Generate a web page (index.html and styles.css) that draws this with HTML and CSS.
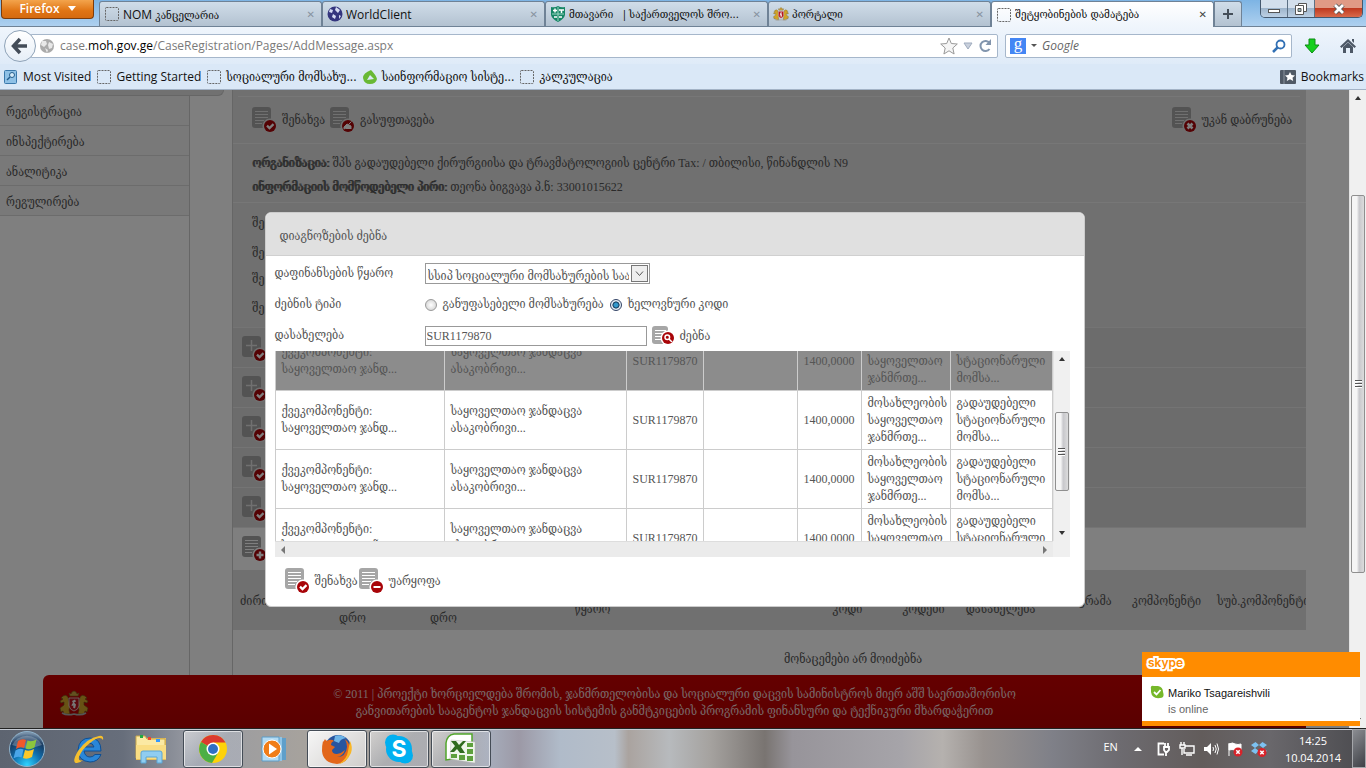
FILE: index.html
```html
<!DOCTYPE html>
<html lang="ka">
<head>
  <meta charset="UTF-8" />
  <meta name="viewport" content="width=device-width, initial-scale=1" />
  <title>შეტყობინების დამატება</title>
  <link rel="stylesheet" href="styles.css">
</head>
<body>
  <svg class="defs" width="0" height="0">
    <symbol id="doc" viewBox="0 0 26 26">
      <rect x="0" y="0" width="19" height="21" rx="3" fill="#a6a6a6"/>
      <path d="M3 4.5h13M3 7.5h13M3 10.5h13M3 13.5h9M3 16.5h7" stroke="#fff" stroke-width="1"/>
      <circle cx="18" cy="19" r="7.6" fill="#fff"/>
      <circle cx="18" cy="19" r="6" fill="#a80408"/>
    </symbol>
    <symbol id="doc-dim" viewBox="0 0 26 26">
      <rect x="0" y="0" width="19" height="21" rx="3" fill="#a6a6a6"/>
      <path d="M3 4.5h13M3 7.5h13M3 10.5h13M3 13.5h9M3 16.5h7" stroke="#e0e0e0" stroke-width="1"/>
      <circle cx="18" cy="19" r="7.6" fill="#e0e0e0"/>
      <circle cx="18" cy="19" r="6" fill="#a80408"/>
    </symbol>
    <symbol id="i-save" viewBox="0 0 26 26"><use href="#doc"/><path d="M15 18.6l2.5 2.5 4-4" fill="none" stroke="#fff" stroke-width="2.2"/></symbol>
    <symbol id="i-save-dim" viewBox="0 0 26 26"><use href="#doc-dim"/><path d="M15 18.6l2.5 2.5 4-4" fill="none" stroke="#fff" stroke-width="2.2"/></symbol>
    <symbol id="i-clear" viewBox="0 0 26 26"><use href="#doc-dim"/><path d="M14 22v-2l3-3 4 2v3l-1-1-1 1-1-1-1 1-1-1zM18.500 17.500l3-3" fill="#fff" stroke="#fff" stroke-width="1"/></symbol>
    <symbol id="i-back" viewBox="0 0 26 26"><use href="#doc-dim"/><path d="M15.500 16.500l5 5M20.500 16.500l-5 5" stroke="#fff" stroke-width="2.600"/></symbol>
    <symbol id="i-minus" viewBox="0 0 26 26"><use href="#doc"/><path d="M14.500 19h7" stroke="#fff" stroke-width="2"/></symbol>
    <symbol id="i-plus" viewBox="0 0 26 26"><use href="#doc"/><path d="M14.500 19h7M18 15.500v7" stroke="#fff" stroke-width="2.400"/></symbol>
    <symbol id="i-expand" viewBox="0 0 26 26">
      <rect width="19" height="21" rx="3" fill="#a6a6a6"/>
      <path d="M4 9.500h11M9.500 4v11" stroke="#e0e0e0" stroke-width="1.500"/>
      <circle cx="18" cy="19" r="7.600" fill="#e0e0e0"/><circle cx="18" cy="19" r="6" fill="#a80408"/>
      <path d="M15 18.600l2.500 2.500 4-4" fill="none" stroke="#fff" stroke-width="2.200"/>
    </symbol>
    <symbol id="i-search" viewBox="0 0 24 20">
      <rect y="0" width="16" height="18" rx="3" fill="#a6a6a6"/>
      <path d="M3 4.500h11M3 7.500h8M3 10.500h6M3 13.500h6" stroke="#fff"/>
      <circle cx="16" cy="12" r="7.500" fill="#fff"/><circle cx="16" cy="12" r="6" fill="#a80408"/>
      <circle cx="15.300" cy="11.300" r="2.300" fill="none" stroke="#fff" stroke-width="1.500"/><path d="M17 13l3 3" stroke="#fff" stroke-width="1.500"/>
    </symbol>
    <symbol id="dotted" viewBox="0 0 16 16"><rect x="1.500" y="1.500" width="13" height="13" rx="1" fill="none" stroke="#666" stroke-dasharray="2 1"/></symbol>
    <symbol id="arms" viewBox="0 0 30 26">
      <path d="M11 6l-1-3 2 1 1-2 2-1 2 1 1 2 2-1-1 3z" fill="#c8a040" stroke="#7c6424" stroke-width=".6"/>
      <path d="M9 7q-2-3-5-1L2 8l2 1-3 2 1 2 3-1v3l-4 3 1 4 2-1 1 3h6l-1-4 1-4-1-4z" fill="#d0a428" stroke="#66501c" stroke-width=".6"/>
      <path d="M21 7q2-3 5-1l2 2-2 1 3 2-1 2-3-1v3l4 3-1 4-2-1-1 3h-6l1-4-1-4 1-4z" fill="#d0a428" stroke="#66501c" stroke-width=".6"/>
      <path d="M10 8h10v8q-1 4-5 5-4-1-5-5z" fill="#b81420" stroke="#ddd" stroke-width=".8"/>
      <path d="M13 11l3-1.500 1 2-2 1 2 2-1 4-2-1 .5-2-2 .5.500-2 1-1z" fill="#eee"/>
      <path d="M3 23q5 3 12 1 7 2 12-1" fill="none" stroke="#aaa" stroke-width="1.600"/>
    </symbol>
  </svg>

  <header class="titlebar">
    <button class="firefox-menu">Firefox <i class="caret"></i></button>
    <div class="tabs">
      <div class="tab"><svg class="fav"><use href="#dotted"/></svg><span>NOM <span class="geo">კანცელარია</span></span><button class="close" aria-label="Close">✕</button></div>
      <div class="tab"><svg class="fav" viewBox="0 0 16 16"><circle cx="8" cy="8" r="7.500" fill="#34357e"/><path d="M3 3l3 1-1 3-3-1zM9 1l4 3-2 3-3-3zM6 8l3 2-1 3-3-2zM12 9l2 1-2 3z" fill="#d6dcf3"/></svg><span>WorldClient</span><button class="close" aria-label="Close">✕</button></div>
      <div class="tab"><svg class="fav" viewBox="0 0 16 16"><path d="M1 1q4 1 7-1 3 2 7 1v8q-1 4-7 7-6-3-7-7z" fill="#168665"/><path d="M8 1v14M2 8h12" stroke="#9cd6c3"/><path d="M5 2.500v4M3 4.500h4M9 4h5M11.500 4v3M4 11h3M9 11h3" stroke="#fff" stroke-width="1.500"/></svg><span class="geo">მთავარი &nbsp; | საქართველოს შრო...</span><button class="close" aria-label="Close">✕</button></div>
      <div class="tab"><svg class="fav" viewBox="0 0 30 26"><use href="#arms"/></svg><span class="geo">პორტალი</span><button class="close" aria-label="Close">✕</button></div>
      <div class="tab active"><svg class="fav"><use href="#dotted"/></svg><span class="geo">შეტყობინების დამატება</span><button class="close" aria-label="Close">✕</button></div>
      <button class="new-tab" aria-label="New tab"><svg width="12" height="12"><path d="M6 1v10M1 6h10" stroke="#444e59" stroke-width="2"/></svg></button>
    </div>
    <div class="win-buttons">
      <button aria-label="Minimize"><svg width="14" height="12"><rect x="1.500" y="6.500" width="11" height="3" fill="#fff" stroke="#555"/></svg></button>
      <button aria-label="Restore"><svg width="14" height="12"><path d="M4.500 .5h8v8h-8z" fill="#fff" stroke="#555"/><path d="M1.500 2.500h8v9h-8z" fill="#fff" stroke="#555"/><path d="M4 5.500h3v3H4z" fill="#9bb" stroke="#555"/></svg></button>
      <button class="win-close" aria-label="Close"><svg width="14" height="12"><path d="M3 2l8 8M11 2l-8 8" stroke="#555" stroke-width="4.500"/><path d="M3 2l8 8M11 2l-8 8" stroke="#fff" stroke-width="2.800"/></svg></button>
    </div>
  </header>

  <nav class="navbar">
    <button class="back" aria-label="Back"><svg width="18" height="18"><path d="M2 9h14M9 2L2.500 9 9 16" fill="none" stroke="#434c58" stroke-width="3.500"/></svg></button>
    <div class="urlbar">
      <svg width="16" height="16" viewBox="0 0 16 16"><circle cx="8" cy="8" r="7" fill="#aaa"/><path d="M3 3l4 0 1 3-3 3-3-2zM10 4l4 2-1 4-3 1-1-4zM6 10l3 2-1 3z" fill="#e8e8e8"/></svg>
      <div class="url" role="textbox" aria-label="Address" contenteditable="true" spellcheck="false">case.<b>moh.gov.ge</b>/CaseRegistration/Pages/AddMessage.aspx</div>
      <svg width="18" height="18" viewBox="0 0 18 18"><path d="M9 1l2.300 5.500 6 .5-4.500 4 1.300 6L9 13.800 3.900 17l1.300-6L.7 7l6-.5z" fill="#f5f5f5" stroke="#999"/></svg>
      <svg width="10" height="16"><path d="M1 5h8l-4 6z" fill="#c9d0dc" stroke="#9fabbe"/></svg>
      <svg width="14" height="16"><path d="M11.500 11a5 5 0 1 1 0-6" fill="none" stroke="#8295ad" stroke-width="2"/><path d="M13 1v6H7.500z" fill="#8295ad"/></svg>
    </div>
    <div class="searchbar">
      <span class="g-logo">g</span><i class="caret dark"></i>
      <input type="text" placeholder="Google" aria-label="Search">
      <svg width="14" height="14"><circle cx="8.500" cy="5.500" r="4" fill="none" stroke="#3270b4" stroke-width="1.800"/><path d="M5.500 8.500l-4.500 4.500" stroke="#3270b4" stroke-width="2.500"/></svg>
    </div>
    <button class="tool" aria-label="Downloads"><svg width="16" height="16"><path d="M5 1h6v6h4l-7 8-7-8h4z" fill="#14d01c" stroke="#0c8c14"/></svg></button>
    <button class="tool" aria-label="Home"><svg width="16" height="16"><path d="M0 8.500L8 1l8 7.500-1.500 1.500L8 4 1.500 10zM3 9l5-4.500L13 9v6h-3v-5H6v5H3z" fill="#4d5866"/><path d="M12 1h2v4l-2-2z" fill="#4d5866"/></svg></button>
  </nav>

  <nav class="bookmarks">
    <a href="#"><svg width="16" height="16"><rect x="1.500" y="1.500" width="12" height="13" rx="1" fill="#8fc1e6" stroke="#3a78ab"/><circle cx="9" cy="6" r="2.500" fill="#d5ebf9" stroke="#235d8d"/><path d="M7 8l-3 3" stroke="#235d8d" stroke-width="1.500"/></svg>Most Visited</a>
    <a href="#"><svg class="fav"><use href="#dotted"/></svg>Getting Started</a>
    <a href="#" class="geo"><svg class="fav"><use href="#dotted"/></svg>სოციალური მომსახუ...</a>
    <a href="#" class="geo"><svg width="16" height="16"><path d="M9 1q-8 3-8 8 1 6 7 6 6 0 7-5Q14 6 9 1zm-1 5l4 4-7 1z" fill="#69b935" fill-rule="evenodd"/></svg>საინფორმაციო სისტე...</a>
    <a href="#" class="geo"><svg class="fav"><use href="#dotted"/></svg>კალკულაცია</a>
    <button class="bm-menu"><svg width="16" height="14"><rect width="16" height="14" rx="1" fill="#505a66"/><path d="M4 0v14" stroke="#8a929c"/><path d="M10 2l1.500 3 3.500.5-2.500 2.200.7 3.300-3.200-1.700L6.800 11l.7-3.300L5 5.500 8.500 5z" fill="#fff"/></svg>Bookmarks</button>
  </nav>

  <div class="viewport">
    <div class="page">
      <div class="columns">
        <aside class="sidebar">
          <div class="side-top"></div>
          <ul>
            <li><a href="#">რეგისტრაცია</a></li>
            <li><a href="#">ინსპექტირება</a></li>
            <li><a href="#">ანალიტიკა</a></li>
            <li><a href="#">რეგულირება</a></li>
          </ul>
        </aside>
        <main class="panel">
          <div class="toolbar">
            <button class="action"><svg><use href="#i-save-dim"/></svg>შენახვა</button>
            <button class="action"><svg><use href="#i-clear"/></svg>გასუფთავება</button>
            <button class="action right"><svg><use href="#i-back"/></svg>უკან დაბრუნება</button>
          </div>
          <div class="info">
            <p><b>ორგანიზაცია:</b> შპს გადაუდებელი ქირურგიისა და ტრავმატოლოგიის ცენტრი Tax: / თბილისი, წინანდლის N9</p>
            <p><b>ინფორმაციის მომწოდებელი პირი:</b> თეონა ბიგვავა პ.ნ: 33001015622</p>
          </div>
          <div class="fields">
            <p>შე</p>
            <p>შე</p>
            <p class="short">შე</p>
            <p class="tall">შე</p>
          </div>
          <div class="section"><svg><use href="#i-expand"/></svg></div>
          <div class="section"><svg><use href="#i-expand"/></svg></div>
          <div class="section"><svg><use href="#i-expand"/></svg></div>
          <div class="section"><svg><use href="#i-expand"/></svg></div>
          <div class="section"><svg><use href="#i-expand"/></svg></div>
          <div class="section open"><svg><use href="#i-plus"/></svg></div>
          <table class="records">
            <colgroup><col class="c1"><col class="c2"><col class="c2"><col class="c4"><col class="c5"><col class="c6"><col class="c7"><col class="c8"><col class="c9"><col class="c10"><col></colgroup>
            <thead>
              <tr>
                <th class="side">ძირი</th>
                <th>&nbsp;<br>&nbsp;<br>დრო</th>
                <th>&nbsp;<br>&nbsp;<br>დრო</th>
                <th>&nbsp;<br>წყარო</th>
                <th></th>
                <th>&nbsp;<br>კოდი</th>
                <th>&nbsp;<br>კოდები</th>
                <th>&nbsp;<br>დასახელება</th>
                <th>პროგრამა</th>
                <th>კომპონენტი</th>
                <th class="side">სუბ.კომპონენტი</th>
              </tr>
            </thead>
          </table>
          <p class="empty">მონაცემები არ მოიძებნა</p>
        </main>
      </div>
      <footer class="footer">
        <svg width="30" height="26"><use href="#arms"/></svg>
        <p>© 2011 | პროექტი ხორციელდება შრომის, ჯანმრთელობისა და სოციალური დაცვის სამინისტროს მიერ აშშ საერთაშორისო<br>განვითარების სააგენტოს ჯანდაცვის სისტემის განმტკიცების პროგრამის ფინანსური და ტექნიკური მხარდაჭერით</p>
      </footer>
      <div class="overlay">
        <form class="modal">
          <h2>დიაგნოზების ძებნა</h2>
          <div class="modal-body">
            <div class="row">
              <label for="source">დაფინანსების წყარო</label>
              <span class="select">
                <select id="source"><option>სსიპ სოციალური მომსახურების სააგენტო</option></select>
                <svg width="17" height="17"><rect x=".5" y=".5" width="16" height="16" fill="#eee" stroke="#777"/><path d="M5 6.500l3.500 4 3.500-4" fill="none" stroke="#555"/></svg>
              </span>
            </div>
            <div class="row">
              <span class="label">ძებნის ტიპი</span>
              <input type="radio" name="type" id="t1"><label for="t1">განუფასებელი მომსახურება</label>
              <input type="radio" name="type" id="t2" checked><label for="t2">ხელოვნური კოდი</label>
            </div>
            <div class="row">
              <label for="name">დასახელება</label>
              <input type="text" id="name" value="SUR1179870">
              <button type="button" class="action search"><svg><use href="#i-search"/></svg>ძებნა</button>
            </div>
            <div class="grid-box">
              <div class="grid-scroll">
                <table class="results">
                  <colgroup><col class="r1"><col class="r2"><col class="r3"><col class="r4"><col class="r5"><col class="r6"><col></colgroup>
                  <tbody>
                    <tr class="selected"><td>ქვეკომპონენტი:<br>საყოველთაო ჯანდ...</td><td>საყოველთაო ჯანდაცვა<br>ასაკობრივი...</td><td>SUR1179870</td><td></td><td>1400,0000</td><td>მოსახლეობის<br>საყოველთაო<br>ჯანმრთე...</td><td>გადაუდებელი<br>სტაციონარული<br>მომსა...</td></tr>
                    <tr><td>ქვეკომპონენტი:<br>საყოველთაო ჯანდ...</td><td>საყოველთაო ჯანდაცვა<br>ასაკობრივი...</td><td>SUR1179870</td><td></td><td>1400,0000</td><td>მოსახლეობის<br>საყოველთაო<br>ჯანმრთე...</td><td>გადაუდებელი<br>სტაციონარული<br>მომსა...</td></tr>
                    <tr><td>ქვეკომპონენტი:<br>საყოველთაო ჯანდ...</td><td>საყოველთაო ჯანდაცვა<br>ასაკობრივი...</td><td>SUR1179870</td><td></td><td>1400,0000</td><td>მოსახლეობის<br>საყოველთაო<br>ჯანმრთე...</td><td>გადაუდებელი<br>სტაციონარული<br>მომსა...</td></tr>
                    <tr><td>ქვეკომპონენტი:<br>საყოველთაო ჯანდ...</td><td>საყოველთაო ჯანდაცვა<br>ასაკობრივი...</td><td>SUR1179870</td><td></td><td>1400,0000</td><td>მოსახლეობის<br>საყოველთაო<br>ჯანმრთე...</td><td>გადაუდებელი<br>სტაციონარული<br>მომსა...</td></tr>
                  </tbody>
                </table>
              </div>
              <div class="vbar"><i class="up"></i><div class="thumb"><i class="grip"></i></div><i class="down"></i></div>
              <div class="hbar"><i class="left"></i><i class="right"></i></div>
            </div>
            <div class="modal-actions">
              <button type="button" class="action"><svg><use href="#i-save"/></svg>შენახვა</button>
              <button type="button" class="action"><svg><use href="#i-minus"/></svg>უარყოფა</button>
            </div>
          </div>
        </form>
      </div>
    </div>
    <div class="vbar page-bar"><i class="up"></i><div class="thumb"><i class="grip"></i></div><i class="down"></i></div>
  </div>

  <div class="toast">
    <div class="toast-head">skype</div>
    <div class="toast-body">
      <svg width="14" height="14"><path d="M1 4Q0 0 4 1h4q5 1 5 6 2 6-3 6-8 1-9-6z" fill="#76b82a"/><path d="M4 7l2.500 2.500L10.500 5" fill="none" stroke="#fff" stroke-width="1.800"/></svg>
      <div><p>Mariko Tsagareishvili</p><p class="status">is online</p></div>
    </div>
  </div>

  <footer class="taskbar">
    <button class="start" aria-label="Start"><svg width="38" height="38" viewBox="0 0 38 38">
      <defs><radialGradient id="orb" cx=".5" cy=".95" r=".9"><stop offset="0" stop-color="#2fd3ff"/><stop offset=".45" stop-color="#0f6fae"/><stop offset=".8" stop-color="#17395f"/><stop offset="1" stop-color="#7890a8"/></radialGradient></defs>
      <circle cx="19" cy="19" r="17.500" fill="url(#orb)" stroke="#8fb3cc"/>
      <path d="M4 15a16 14 0 0 1 30 0q-15 6-30 0z" fill="#fff" opacity=".25"/>
      <path d="M10 11q4-3 8-1l-2 8q-4-2-8 1z" fill="#f0592b"/><path d="M19.500 10.500q4 2 9-1l-2 8q-5 3-9 1z" fill="#8cc63e"/>
      <path d="M7.500 20.500q4-3 8-1l-2 8q-4-2-8 1z" fill="#4aa6e8"/><path d="M17 20q4 2 9-1l-2 8q-5 3-9 1z" fill="#fdc827"/></svg></button>
    <button class="task" aria-label="Internet Explorer"><svg width="34" height="32" viewBox="0 0 34 32"><path d="M29 18H12q1 6 6 6 3 0 5-2.500h6Q26 29 18 29 6 28 6 17 7 5 18 5q11 0 11 13zM12 14h10q-1-4-5-4t-5 4z" fill="#2a86d8" stroke="#0e4f93"/><path d="M31 7q1-5-4-4Q15 5 6 18-1 30 5 30q3 0 6-3-5 2-4-3 3-8 11-14Q28 2 31 7z" fill="#f5bf2e"/></svg></button>
    <button class="task" aria-label="Explorer"><svg width="34" height="32" viewBox="0 0 34 32"><path d="M2 5h30v22H2z" fill="#e6bf5a"/><path d="M2 3h9l2 3h18v19H2z" fill="#fbe9a3" stroke="#caa94a"/><path d="M6 2h3v3H6z" fill="#2a4"/><path d="M14 4h3v3h-3z" fill="#e43"/><path d="M22 6h4v3h-4z" fill="#39f"/><path d="M2 12h30v14H2z" fill="#f9dd83"/><path d="M7 30V20q0-2 2-2h17q2 0 2 2v10h-5v-6H12v6z" fill="#90cdf0" stroke="#5aa6d6"/></svg></button>
    <button class="task open" aria-label="Chrome"><svg width="30" height="30" viewBox="0 0 30 30"><circle cx="15" cy="15" r="14" fill="#fdd20a"/><path d="M15 15L3 8A14 14 0 0 1 27.500 8.500H15z" fill="#db3a2e"/><path d="M15 15L3 8a14 14 0 0 0 11 21l6-10z" fill="#4caf45"/><circle cx="15" cy="15" r="6.500" fill="#fff"/><circle cx="15" cy="15" r="5" fill="#2f6fc4"/></svg></button>
    <button class="task" aria-label="Media Player"><svg width="30" height="30" viewBox="0 0 30 30"><path d="M8 4h18v22H8z" fill="#5f9fca"/><path d="M5 3h17v24H5z" fill="#8fc4e6"/><path d="M2 3h17v24H2z" fill="#b3dbf3" stroke="#5c9cc6"/><circle cx="12" cy="15" r="9" fill="#f07d18" stroke="#fff"/><path d="M9 9.500l8 5.500-8 5.500z" fill="#fff"/></svg></button>
    <button class="task open current" aria-label="Firefox"><svg width="32" height="32" viewBox="0 0 32 32"><circle cx="17" cy="15" r="13" fill="#27559f"/><path d="M14 3q6-2 11 2-6 1-7 5l-5-2z" fill="#6db5e8"/><path d="M2 8q0 2 2-2 1 3 4 1 3-1 5 1-3 1-3 4l4 2-3 3q0 4 5 4 5-1 8-4-2 6-8 7 9 0 10-10 0-4-2-8 6 5 5 13-2 11-13 12Q2 30 1 18q0-6 1-10z" fill="#e2661a"/><path d="M29 8q3 6 1 12-4 9-12 11 8-5 9-13z" fill="#f9b625"/></svg></button>
    <button class="task open" aria-label="Skype"><svg width="30" height="30" viewBox="0 0 30 30"><circle cx="15" cy="15" r="13" fill="#00aff0"/><circle cx="9" cy="8.500" r="8" fill="#00aff0"/><circle cx="21" cy="21.500" r="8" fill="#00aff0"/><text x="15" y="23" text-anchor="middle" class="skype-s">S</text></svg></button>
    <button class="task open" aria-label="Excel"><svg width="32" height="32" viewBox="0 0 32 32"><path d="M1 27V10q1-8 8-9h18v22z" fill="#fff" stroke="#52a62c" stroke-width="1.500"/><path d="M6 7l24 2v21L5 26z" fill="#eef6ea" stroke="#bbb" stroke-width=".5"/><path d="M22 10h6v4h-6zM22 16h6v5h-6zM22 23h6v5h-6zM14 22h6v5h-6zM6 21h6v4H6z" fill="#5da03d"/><path d="M6 8h5l3 4 4-4h3l-5 6 4 6h-5l-3-4-3 3H5l5-6z" fill="#2f6b1e"/></svg></button>
    <div class="tray">
      <span class="lang">EN</span>
      <i class="up-arrow"></i>
      <svg viewBox="0 0 16 16"><path d="M9 2.500H3.500v11H9M10 5v-3M13 5v-3M9 6h5v3l-2 2h-1.500L9 9zM11 11v4" fill="none" stroke="#fff" stroke-width="1.800"/></svg>
      <svg viewBox="0 0 16 16"><path d="M6 5h9v7H5V8M2 1v3M5 1v3M1 4h5v3H1zM3 7v7M7 14h6" fill="none" stroke="#fff" stroke-width="1.400"/></svg>
      <svg viewBox="0 0 16 16"><path d="M1 6h3l4-4v12l-4-4H1z" fill="#fff"/><path d="M10 6q1 2 0 4M12 4q2.500 4 0 8M14 2.500q3 5.500 0 11" fill="none" stroke="#fff"/></svg>
      <svg viewBox="0 0 16 16"><path d="M2 2v13M2 3q4-2 6 0 3 1 6 0v6q-3 2-6 0-3-1-6 0z" fill="#fff" stroke="#fff"/><circle cx="11" cy="11" r="4.500" fill="#d8232a"/><path d="M9.300 9.300l3.400 3.400M12.700 9.300l-3.400 3.400" stroke="#fff" stroke-width="1.500"/></svg>
      <svg viewBox="0 0 16 16"><path d="M4.500 1L8 4 4 7 0 4zM11.500 1L8 4l4 3 4-3zM4 7l4 3-3.500 3L0 10zM12 7l-4 3 3.500 3L16 10z" fill="#7cc1f1"/><circle cx="11" cy="11.500" r="4.500" fill="#d8232a"/><path d="M9.300 9.800l3.400 3.400M12.700 9.800l-3.400 3.400" stroke="#fff" stroke-width="1.500"/></svg>
      <div class="clock">14:25<br>10.04.2014</div>
      <button class="show-desktop" aria-label="Show desktop"></button>
    </div>
  </footer>
</body>
</html>
```
FILE: styles.css
```css
* {
  box-sizing: border-box;
}
body {
  margin: 0;
  height: 100vh;
  display: flex;
  flex-direction: column;
  overflow: hidden;
  font-family: "Open Sans", "DejaVu Serif Condensed", sans-serif;
  font-size: 12px;
  color: #111;
}
p, h2, ul {
  margin: 0;
  padding: 0;
}
button, input, select {
  font: inherit;
  color: inherit;
}
button {
  background: none;
  border: 0;
  padding: 0;
  display: flex;
  align-items: center;
  justify-content: center;
}
a {
  color: inherit;
  text-decoration: none;
}
svg {
  flex: none;
}
.defs {
  position: absolute;
}
.geo {
  font-family: "DejaVu Serif Condensed", serif;
  font-size: 11px;
}
.fav {
  width: 16px;
  height: 16px;
}

/* title bar */
.titlebar {
  height: 27px;
  display: flex;
  align-items: flex-end;
  justify-content: space-between;
  background: linear-gradient(#7db4e4, #aed0ef);
  border-bottom: 1px solid #6f8296;
}
.firefox-menu {
  align-self: flex-start;
  width: 93px;
  height: 19px;
  margin: 0 5px 0 1px;
  padding-bottom: 2px;
  gap: 8px;
  color: #fff;
  font-weight: 600;
  font-size: 12px;
  background: linear-gradient(#f3a44c, #e07414 60%, #d56a10);
  border: 1px solid #7c3c0c;
  border-top: 0;
  border-radius: 0 0 4px 4px;
}
.caret {
  border: 4px solid transparent;
  border-top: 5px solid #fff;
  border-bottom: 0;
}
.caret.dark {
  border-width: 3px;
  border-top: 3px solid #555;
  border-bottom: 0;
}
.tabs {
  flex: 1;
  display: flex;
  height: 25px;
  min-width: 0;
}
.tab {
  flex: 0 1 223px;
  min-width: 0;
  display: flex;
  align-items: center;
  gap: 3px;
  padding: 0 6px 0 4px;
  white-space: nowrap;
  background: linear-gradient(#d0dde9, #b3c2d1);
  border: 1px solid #6f8296;
  border-bottom: 0;
  border-radius: 3px 3px 0 0;
}
.tab.active {
  background: linear-gradient(#fff, #eff5fc);
  height: 26px;
}
.tab > span {
  overflow: hidden;
}
.close {
  margin-left: auto;
  font-family: "DejaVu Sans", sans-serif;
  font-size: 10px;
  color: #8893a0;
}
.active .close {
  color: #444;
}
.new-tab {
  width: 28px;
  background: linear-gradient(#d0dde9, #b3c2d1);
  border: 1px solid #6f8296;
  border-bottom: 0;
  border-radius: 0 3px 0 0;
}
.win-buttons {
  align-self: flex-start;
  display: flex;
  height: 18px;
  margin-right: 3px;
  border: 1px solid #44586e;
  border-top: 0;
  border-radius: 0 0 5px 5px;
  overflow: hidden;
}
.win-buttons button {
  width: 27px;
  border-right: 1px solid #5c7084;
  background: linear-gradient(#d3dfec 45%, #9eb5cc 50%, #bcd0e4);
}
.win-buttons .win-close {
  width: 47px;
  border: 0;
  background: linear-gradient(#e09a85 45%, #bf3a20 50%, #d9694a);
}

/* navigation and bookmarks */
.navbar {
  height: 37px;
  display: flex;
  align-items: center;
  padding: 0 9px 0 4px;
  background: linear-gradient(#eff5fc, #dfebf8);
}
.back {
  width: 32px;
  height: 32px;
  background: linear-gradient(#fff, #e6eef7);
  border: 1px solid #8fa3b8;
  border-radius: 50%;
  z-index: 1;
}
.urlbar, .searchbar {
  height: 24px;
  display: flex;
  align-items: center;
  background: #fff;
  border: 1px solid #a6b7cb;
  border-radius: 2px;
}
.urlbar {
  flex: 1;
  gap: 5px;
  margin: 0 7px 0 -6px;
  padding: 0 5px 0 8px;
}
.url {
  flex: 1;
  color: #7a7a7a;
  outline: 0;
}
.url b {
  font-weight: 400;
  color: #000;
}
.searchbar {
  width: 287px;
  gap: 5px;
  margin-right: 11px;
  padding: 0 5px 0 4px;
}
.searchbar input {
  flex: 1;
  min-width: 0;
  border: 0;
  padding: 0;
  outline: 0;
  font-style: italic;
}
.searchbar input::placeholder {
  color: #666;
}
.g-logo {
  width: 16px;
  height: 16px;
  line-height: 12px;
  text-align: center;
  font-family: "Liberation Serif", serif;
  font-size: 17px;
  color: #fff;
  background: #4486f4;
}
.tool {
  width: 18px;
}
.tool + .tool {
  margin-left: 18px;
}
.bookmarks {
  height: 26px;
  display: flex;
  align-items: center;
  gap: 5px;
  padding: 0 2px 0 3px;
  background: #dae8f7;
  border-bottom: 1px solid #a3b3c6;
}
.bookmarks a {
  display: flex;
  align-items: center;
  gap: 4px;
  white-space: nowrap;
}
.bookmarks .geo {
  font-size: 12px;
}
.bm-menu {
  margin-left: auto;
  gap: 5px;
}

/* page */
.viewport {
  flex: 1;
  min-height: 0;
  display: flex;
}
.page {
  flex: 1;
  min-width: 0;
  position: relative;
  display: flex;
  flex-direction: column;
  background: #fff;
  font-family: "Liberation Serif", "DejaVu Serif Condensed", serif;
  font-size: 12px;
  line-height: 17px;
  color: #555;
}
.columns {
  flex: 1;
  display: flex;
  min-height: 0;
}
.sidebar {
  width: 190px;
  margin-right: 42px;
  border-right: 1px solid #ccc;
}
.side-top {
  height: 6px;
  width: 224px;
  background: #e2e2e2;
  border: 1px solid #ccc;
  border-width: 0 1px 1px 0;
  border-radius: 0 0 6px 0;
}
.sidebar ul {
  list-style: none;
}
.sidebar li {
  height: 30px;
  line-height: 32px;
  padding-left: 6px;
  background: #f3f3f3;
  border-bottom: 1px solid #d8d8d8;
}
.panel {
  flex: 1;
  min-width: 0;
  margin-right: 43px;
  border-left: 1px solid #ccc;
}
.toolbar {
  height: 54px;
  display: flex;
  align-items: center;
  gap: 5px;
  padding: 6px 14px 0 19px;
  background: linear-gradient(#eee, #eee) 5px 6px / calc(100% - 11px) 1px no-repeat #e0e0e0;
  border-bottom: 1px solid #eee;
}
.action {
  gap: 4px;
  line-height: 20px;
  white-space: nowrap;
}
.action svg {
  width: 26px;
  height: 26px;
}
.action.right {
  margin-left: auto;
}
.info {
  height: 59px;
  padding: 7px 19px 0;
  line-height: 24px;
  background: #e0e0e0;
  border-bottom: 1px solid #eee;
}
/* same advance widths as the regular face */
.info b {
  font-weight: 400;
  text-shadow: 1px 0 #555;
}
.fields {
  padding: 5px 19px 0;
  background: #e0e0e0;
  line-height: 30px;
}
.fields .short {
  line-height: 22px;
}
.fields .tall {
  line-height: 37px;
}
.section {
  height: 40px;
  padding: 8px 9px;
  background: #d8d8d8;
  border-top: 1px solid #e8e8e8;
}
.section svg {
  width: 26px;
  height: 26px;
}
.section.open {
  height: 43px;
  background: #fff;
}
.records {
  width: 100%;
  height: 60px;
  table-layout: fixed;
  border-collapse: collapse;
  background: #e0e0e0;
}
.records th {
  padding: 2px 0 0;
  font-weight: 400;
  white-space: nowrap;
  overflow: hidden;
}
.records .side {
  padding-left: 7px;
  text-align: left;
}
.c1 { width: 74px; }
.c2 { width: 91px; }
.c4 { width: 207px; }
.c5 { width: 110px; }
.c6 { width: 83px; }
.c7 { width: 69px; }
.c8 { width: 85px; }
.c9 { width: 80px; }
.c10 { width: 87px; }
.empty {
  padding: 21px 0 0 167px;
  text-align: center;
}
.footer {
  flex: none;
  height: 53px;
  margin: 0 43px;
  padding: 3px 16px 0;
  display: flex;
  align-items: center;
  color: #f0d0d0;
  background: linear-gradient(#ca0000, #b40000);
  border-radius: 6px 6px 0 0;
}
.footer p {
  flex: 1;
  margin-right: 30px;
  text-align: center;
}

/* modal */
.overlay {
  position: absolute;
  inset: 0;
  display: flex;
  align-items: center;
  justify-content: center;
  padding-top: 1px;
  background: rgba(0,0,0,0.5);
}
.modal {
  width: 820px;
  background: #fff;
  border: 1px solid #ccc;
  border-radius: 6px;
}
.modal h2 {
  height: 43px;
  padding-left: 14px;
  line-height: 46px;
  font-size: 12px;
  font-weight: 400;
  background: #e0e0e0;
  border-bottom: 1px solid #d0d0d0;
  border-radius: 5px 5px 0 0;
}
.modal-body {
  padding: 2px 14px 12px 9px;
}
.row {
  height: 31px;
  display: flex;
  align-items: center;
}
.row > :first-child {
  width: 150px;
}
.row input[type="radio"] {
  appearance: none;
  width: 12px;
  height: 12px;
  margin: 0 6px 0 0;
  border: 1px solid #999;
  border-radius: 50%;
  background: radial-gradient(#fff, #ccc);
}
.row input[type="radio"]:checked {
  border-color: #346;
  background: radial-gradient(#39c 25%, #135 45%, #e4eef6 55%);
}
.row label + input[type="radio"] {
  margin-left: 6px;
}
.row input[type="text"] {
  width: 222px;
  height: 20px;
  padding: 2px 1px 0;
  border: 1px solid #999;
}
.select {
  position: relative;
  width: 225px;
}
.select select {
  display: block;
  appearance: none;
  width: 100%;
  height: 21px;
  padding: 4px 20px 0 2px;
  background: #fff;
  border: 1px solid #999;
  border-radius: 0;
}
.select svg {
  position: absolute;
  right: 2px;
  top: 2px;
}
.search {
  margin-left: 5px;
}
.search svg {
  width: 24px;
  height: 20px;
}
.grid-box {
  display: grid;
  grid-template-columns: 1fr 17px;
  grid-template-rows: 190px 16px;
  background: #f0f0f0;
}
.grid-scroll {
  overflow: hidden;
  background: #fff;
}
.results {
  width: 100%;
  /* scrolled part way down the list */
  margin-top: -20px;
  table-layout: fixed;
  border-collapse: collapse;
}
.results td {
  height: 59px;
  padding: 3px 0 3px 6px;
  border: 1px solid #ccc;
  white-space: nowrap;
}
.results .selected {
  background: #8c8c8c;
}
.r1 { width: 169px; }
.r2 { width: 182px; }
.r3 { width: 77px; }
.r4 { width: 94px; }
.r5 { width: 64px; }
.r6 { width: 89px; }
.modal-actions {
  display: flex;
  gap: 1px;
  padding: 11px 0 0 10px;
}

/* scroll bars */
.vbar {
  display: flex;
  flex-direction: column;
  align-items: center;
  padding: 6px 1px;
  background: #f0f0f0;
  border-left: 1px solid #e3e3e3;
}
.vbar .up, .vbar .down {
  border: 3px solid transparent;
}
.vbar .up {
  border-top: 0;
  border-bottom: 4px solid #333;
}
.vbar .down {
  margin-top: auto;
  border-bottom: 0;
  border-top: 4px solid #333;
}
.thumb {
  width: 100%;
  height: 79px;
  margin-top: 51px;
  display: flex;
  align-items: center;
  justify-content: center;
  background: linear-gradient(90deg, #f5f5f5 40%, #c8c8cc 60%, #dcdcdc);
  border: 1px solid #8f8f8f;
  border-radius: 2px;
}
.grip {
  width: 7px;
  height: 8px;
  background: repeating-linear-gradient(#555 0 1px, #fff 1px 2px, transparent 2px 3px);
}
.page-bar {
  width: 17px;
}
.page-bar .thumb {
  height: 378px;
  margin-top: 95px;
}
.hbar {
  display: flex;
  align-items: center;
  justify-content: space-between;
  padding: 0 6px;
  background: #ebebeb;
  border-top: 1px solid #ddd;
}
.hbar i {
  border: 4px solid transparent;
}
.hbar .left {
  border-left: 0;
  border-right: 4px solid #777;
}
.hbar .right {
  border-right: 0;
  border-left: 4px solid #777;
}

/* skype toast lies over the window corner */
.toast {
  position: fixed;
  right: 6px;
  bottom: 42px;
  width: 218px;
  background: #fff;
  border-bottom: 5px solid #ff8c00;
  font-family: "Liberation Sans", sans-serif;
  z-index: 5;
}
.toast-head {
  height: 25px;
  padding-left: 6px;
  line-height: 22px;
  font-family: Inter, sans-serif;
  font-size: 12px;
  font-weight: 600;
  color: #ff8c00;
  background: #ff8c00;
  -webkit-text-stroke: 4px #fff;
  paint-order: stroke fill;
}
.toast-body {
  height: 44px;
  display: flex;
  gap: 4px;
  padding: 8px 8px 0;
  line-height: 16px;
  font-size: 11px;
}
.status {
  color: #666;
}

/* taskbar */
.taskbar {
  flex: none;
  height: 40px;
  display: flex;
  align-items: center;
  border-top: 1px solid #222;
  box-shadow: inset 0 1px #c5cad2;
  background: linear-gradient(90deg, #5d6470 0, #676e7b 9%, #979aa2 14%, #a6a29d 22%, #a29e9c 34%, #a5abb9 36%, #9c99a6 38%, #b0bbc9 41%, #b7bfc9 45%, #aaa39f 46%, #b7babd 49%, #a5a29f 52%, #797471 56%, #97949a 58%, #a6a4a9 66%, #b5b1ae 69%, #98928f 72%, #7f8088 77%, #6d6b70 82%, #625c5b 88%, #69676b 93%, #4b4b4f 100%);
}
.start {
  width: 54px;
  margin-right: 5px;
}
.task {
  width: 60px;
  height: 38px;
  margin-right: 2px;
  border: 1px solid transparent;
}
.task.open {
  background: linear-gradient(135deg, rgba(255,255,255,.5), rgba(190,200,215,.35) 50%, rgba(180,185,200,.5));
  border-color: #444c56;
  border-radius: 3px;
  box-shadow: inset 0 0 0 1px rgba(255,255,255,.6);
}
.task.current {
  background: linear-gradient(135deg, #f6f6f6, #cfcdcb);
}
.skype-s {
  font: 700 23px Inter, sans-serif;
  fill: #fff;
}
.tray {
  margin-left: auto;
  height: 100%;
  display: flex;
  align-items: center;
  gap: 8px;
  color: #fff;
}
.tray svg {
  width: 16px;
  height: 16px;
}
.lang {
  margin: 0 8px 4px 0;
  font-size: 11px;
}
.up-arrow {
  margin-right: 5px;
  border: 4px solid transparent;
  border-top: 0;
  border-bottom: 4px solid #fff;
}
.clock {
  margin-left: 10px;
  text-align: center;
  font-size: 11px;
  line-height: 17px;
}
.show-desktop {
  width: 14px;
  height: 100%;
  margin-left: 3px;
  background: linear-gradient(135deg, #8b8d92, #3e4046);
  border: 1px solid #a4a6aa;
}
```
